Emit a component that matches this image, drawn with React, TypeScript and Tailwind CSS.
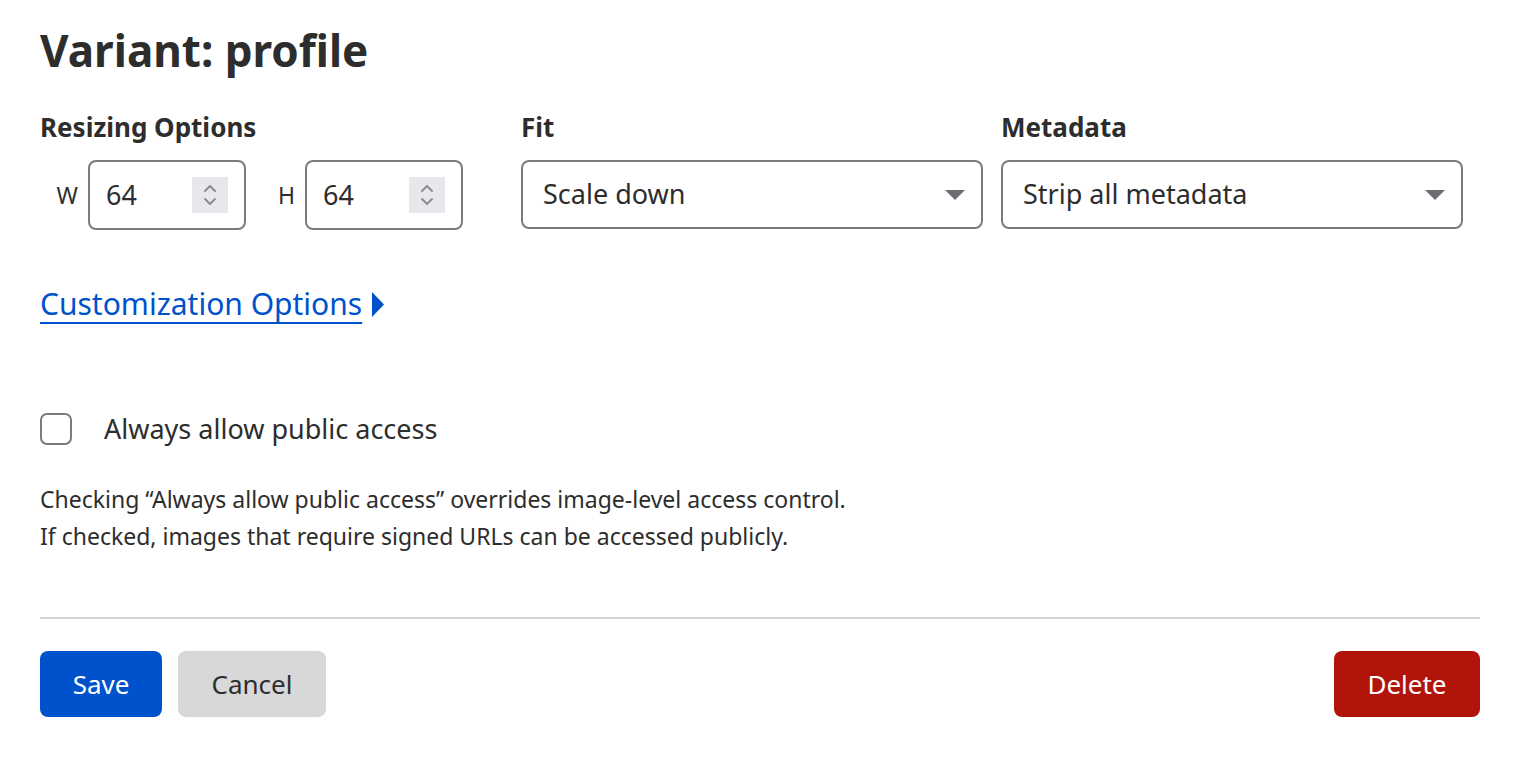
import React, { useState } from 'react';

const font = { fontFamily: '"Noto Sans", "Open Sans", sans-serif' };

const Spinner: React.FC = () => (
  <div className="flex h-[36px] w-[36px] flex-col items-center justify-center bg-[#e8e8ec]">
    <svg width="16" height="26" viewBox="0 0 16 26" fill="none" stroke="#8a8d90" strokeWidth="2" strokeLinecap="round" strokeLinejoin="round">
      <path d="M3 9 L8 4 L13 9" />
      <path d="M3 17 L8 22 L13 17" />
    </svg>
  </div>
);

const NumberField: React.FC<{ label: string; value: string }> = ({ label, value }) => (
  <div className="flex items-center gap-[10px]">
    <span className="w-[24px] text-right text-[23px] text-[#2d2d2d]">{label}</span>
    <div className="flex h-[70px] w-[158px] items-center justify-between rounded-[8px] border-2 border-[#7b7b7b] pl-[16px] pr-[16px]">
      <span className="text-[27px] text-[#2d2d2d]">{value}</span>
      <Spinner />
    </div>
  </div>
);

const Select: React.FC<{ value: string }> = ({ value }) => (
  <div className="flex h-[69px] w-full items-center justify-between rounded-[8px] border-2 border-[#7b7b7b] pl-[20px] pr-[16px]">
    <span className="text-[27px] text-[#2d2d2d]">{value}</span>
    <svg width="20" height="10" viewBox="0 0 20 10">
      <path d="M0 0 H20 L10 10 Z" fill="#6a6e73" />
    </svg>
  </div>
);

export default function App() {
  const [checked, setChecked] = useState(false);

  return (
    <div style={font} className="min-h-screen bg-white px-[40px] pt-[22px] text-[#2d2d2d]">
      <h1 className="text-[44px] font-bold leading-[56px]">Variant: profile</h1>

      <div className="mt-[33px] grid grid-cols-[481px_480px_462px]">
        <div>
          <div className="text-[26px] font-bold leading-[32px]">Resizing Options</div>
          <div className="mt-[17px] flex items-center gap-[25px] pl-[14px]">
            <NumberField label="W" value="64" />
            <NumberField label="H" value="64" />
          </div>
        </div>
        <div className="pr-[18px]">
          <div className="text-[26px] font-bold leading-[32px]">Fit</div>
          <div className="mt-[17px]">
            <Select value="Scale down" />
          </div>
        </div>
        <div>
          <div className="text-[26px] font-bold leading-[32px]">Metadata</div>
          <div className="mt-[17px]">
            <Select value="Strip all metadata" />
          </div>
        </div>
      </div>

      <div className="mt-[54px] flex items-center">
        <a href="#" className="text-[30px] leading-[40px] text-[#0052cc] underline decoration-2 underline-offset-[7px]">
          Customization Options
        </a>
        <svg className="ml-[10px]" width="12" height="25" viewBox="0 0 12 25">
          <path d="M0 0 L12 12.5 L0 25 Z" fill="#0052cc" />
        </svg>
      </div>

      <label className="mt-[87px] flex items-center gap-[32px]">
        <button
          type="button"
          onClick={() => setChecked(!checked)}
          className="h-[32px] w-[32px] rounded-[7px] border-2 border-[#7b7b7b] bg-white"
        />
        <span className="text-[27px] leading-[36px]">Always allow public access</span>
      </label>

      <div className="mt-[34px] text-[23px] leading-[37px] text-[#2d2d2d]">
        <p>Checking “Always allow public access” overrides image-level access control.</p>
        <p>If checked, images that require signed URLs can be accessed publicly.</p>
      </div>

      <div className="mt-[62px] h-[2px] w-[1440px] bg-[#d2d2d2]" />

      <div className="mt-[32px] flex w-[1440px] items-center">
        <button className="h-[66px] w-[122px] rounded-[8px] bg-[#0052cc] text-[26px] text-white">Save</button>
        <button className="ml-[16px] h-[66px] w-[148px] rounded-[8px] bg-[#d8d8d8] text-[26px] text-[#2d2d2d]">Cancel</button>
        <button className="ml-auto h-[66px] w-[146px] rounded-[8px] bg-[#b1140a] text-[26px] text-white">Delete</button>
      </div>
    </div>
  );
}
